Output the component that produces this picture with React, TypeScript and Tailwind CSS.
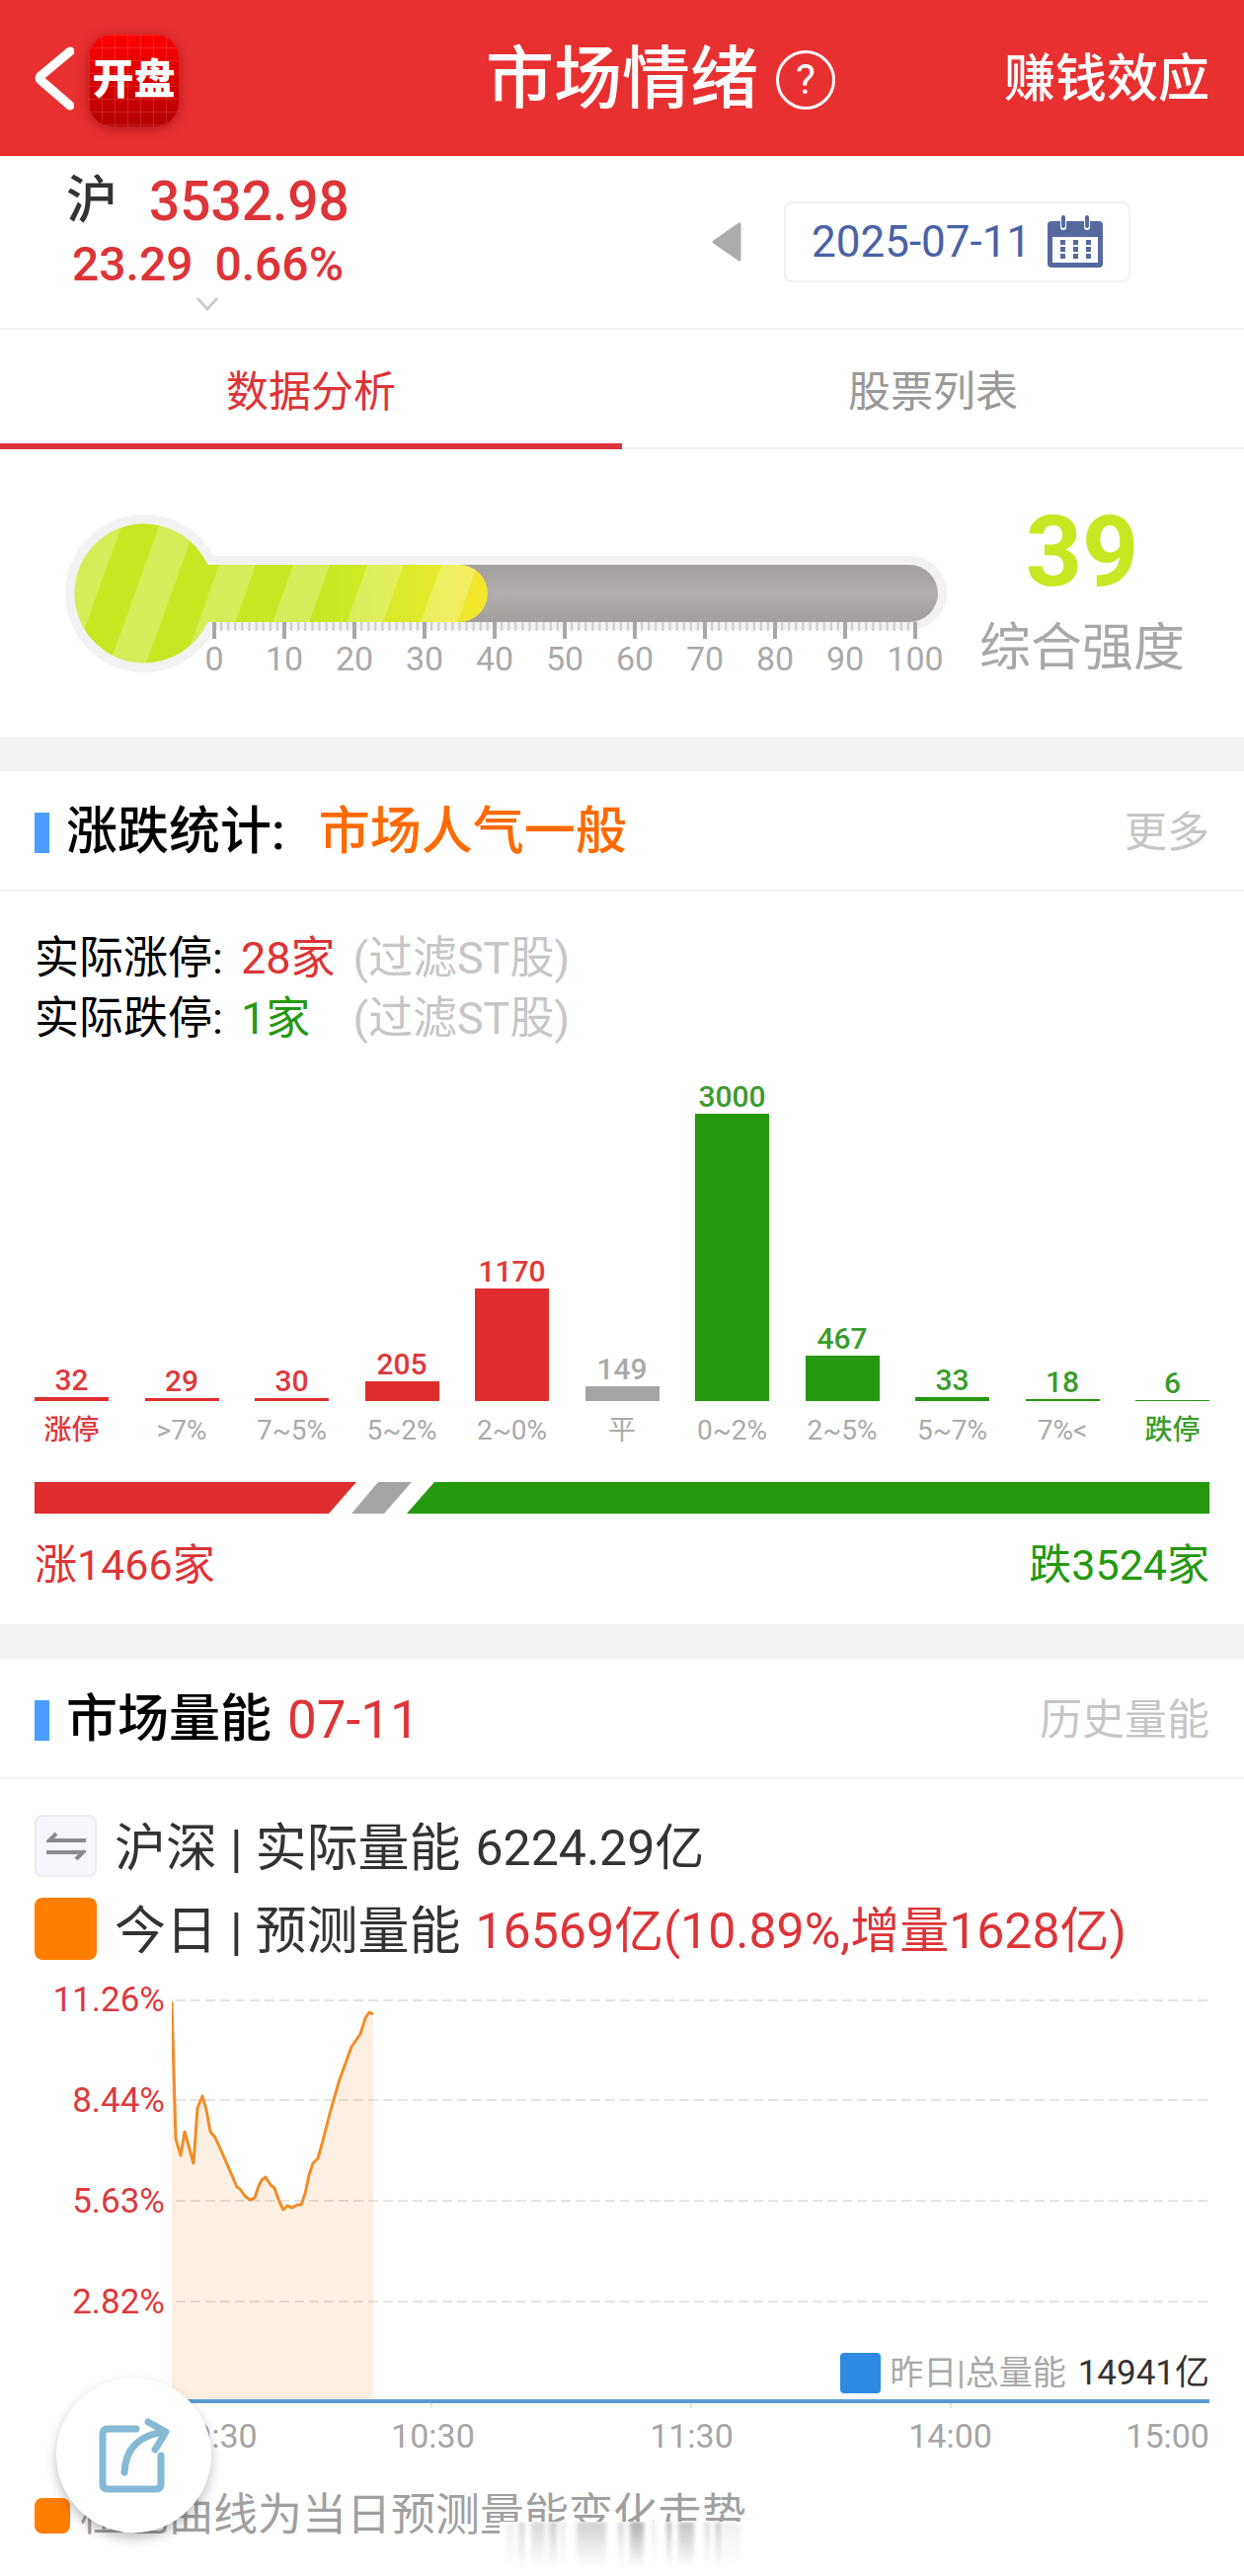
import type { ReactNode } from "react";

const RED = "#df2d2d";
const GREEN = "#24980f";
const GREY = "#a5a5a5";

const distribution = [
  { label: "涨停", count: 32, bar: "bg-[#df2d2d]", text: "text-[#dc3a3c]", labelText: "font-medium text-[#dc3a3c]" },
  { label: ">7%", count: 29, bar: "bg-[#df2d2d]", text: "text-[#dc3a3c]", labelText: "text-[#aaaaaa]" },
  { label: "7~5%", count: 30, bar: "bg-[#df2d2d]", text: "text-[#dc3a3c]", labelText: "text-[#aaaaaa]" },
  { label: "5~2%", count: 205, bar: "bg-[#df2d2d]", text: "text-[#dc3a3c]", labelText: "text-[#aaaaaa]" },
  { label: "2~0%", count: 1170, bar: "bg-[#df2d2d]", text: "text-[#dc3a3c]", labelText: "text-[#aaaaaa]" },
  { label: "平", count: 149, bar: "bg-[#a5a5a5]", text: "text-[#aaaaaa]", labelText: "text-[#aaaaaa]" },
  { label: "0~2%", count: 3000, bar: "bg-[#24980f]", text: "text-[#3a9c2c]", labelText: "text-[#aaaaaa]" },
  { label: "2~5%", count: 467, bar: "bg-[#24980f]", text: "text-[#3a9c2c]", labelText: "text-[#aaaaaa]" },
  { label: "5~7%", count: 33, bar: "bg-[#24980f]", text: "text-[#3a9c2c]", labelText: "text-[#aaaaaa]" },
  { label: "7%<", count: 18, bar: "bg-[#24980f]", text: "text-[#3a9c2c]", labelText: "text-[#aaaaaa]" },
  { label: "跌停", count: 6, bar: "bg-[#24980f]", text: "text-[#3a9c2c]", labelText: "font-medium text-[#3a9c2c]" },
];

const limits = [
  { name: "实际涨停:", value: "28家", note: "(过滤ST股)", color: "text-[#dc3438]" },
  { name: "实际跌停:", value: "1家", note: "(过滤ST股)", color: "text-[#24980f]" },
];

const curve =
  "0,3 4,141 9,158 13,134 22,166 26,110 31,98 35,112 39,134 44,140 53,160 66,190 69,192 74,199 79,203 84,201 88,189 91,183 95,180 100,188 104,191 109,205 113,213 117,209 122,211 127,208 131,208 135,197 139,178 143,166 148,161 152,147 161,112 170,81 182,48 191,35 196,19 200,13 204,15";

// light diagonal bands painted over the thermometer fill
const stripes = [31, 106, 181, 256, 331, 406];

// [x, width, opacity] of the streaks fading out under the caption
const streaks = [
  [6, 10, 0.15], [20, 5, 0.5], [32, 14, 0.4], [50, 8, 0.5], [62, 4, 0.3], [78, 30, 0.45],
  [120, 6, 0.4], [132, 14, 0.8], [154, 4, 0.2], [169, 5, 0.7], [181, 16, 0.6], [208, 5, 0.4], [219, 5, 0.6], [226, 18, 0.15],
];

function Header() {
  return (
    <header className="grid h-[158px] grid-cols-[1fr_auto_1fr] items-center bg-[#e83030] px-[35px] pt-1 text-white">
      <div className="flex items-center gap-[15px]">
        <button type="button" aria-label="返回">
          <svg width="40" height="74" viewBox="0 0 40 74" fill="none" stroke="currentColor" strokeWidth="9" strokeLinecap="round" strokeLinejoin="round">
            <path d="M36 8 6 33q-2 2 0 4L36 63" />
          </svg>
        </button>
        <div className="flex h-[93px] w-[91px] items-center justify-center rounded-3xl bg-linear-to-b from-[#ff0000] to-[#b40000] shadow-[0_2px_12px_rgba(120,0,0,0.5)]">
          <div className="flex h-full w-full items-center justify-center rounded-3xl bg-[linear-gradient(to_right,#ffffff22_1px,transparent_1px),linear-gradient(to_bottom,#ffffff22_1px,transparent_1px)] bg-[size:13px_13px]">
            <span className="text-[42px] font-black leading-none">开盘</span>
          </div>
        </div>
      </div>
      <h1 className="text-[69px] font-medium leading-[80px]">市场情绪</h1>
      <div className="flex items-center justify-between pl-[18px]">
        <button type="button" aria-label="说明" className="flex h-[60px] w-[60px] items-center justify-center rounded-full border-3 border-white text-[42px] leading-none">
          ?
        </button>
        <a href="#effect" className="text-[52px] font-medium leading-[60px]">赚钱效应</a>
      </div>
    </header>
  );
}

function Quote() {
  return (
    <section className="flex h-[176px] items-center justify-between border-b-2 border-[#f3f3f3] pl-[67px] pr-[115px]">
      <button type="button" className="flex flex-col text-left font-medium">
        <span className="flex items-center leading-[64px]">
          <span className="w-[84px] text-[52px] text-[#333333]">沪</span>
          <span className="text-[55px] text-[#dc3438]">3532.98</span>
        </span>
        <span className="flex gap-[22px] pl-[6px] text-[48px] leading-[64px] text-[#dc3438]">
          <span>23.29</span>
          <span>0.66%</span>
        </span>
        <svg className="ml-[130px]" width="26" height="18" viewBox="0 0 26 18" fill="none" stroke="#cccccc" strokeWidth="3">
          <path d="M3 2l10 11L23 2" />
        </svg>
      </button>
      <div className="flex items-center gap-[42px]">
        <button type="button" aria-label="前一天">
          <svg width="32" height="42" viewBox="0 0 32 42" fill="#acacac" stroke="#acacac" strokeWidth="3" strokeLinejoin="round">
            <path d="M3 21 29 3v36z" />
          </svg>
        </button>
        <button type="button" className="flex h-[82px] w-[351px] items-center justify-between rounded-lg border-2 border-[#f2f2f2] pl-[26px] pr-[26px]">
          <span className="text-[44px] leading-none text-[#4862a6]">2025-07-11</span>
          <svg width="56" height="54" viewBox="0 0 56 54" fill="#56699f">
            <path d="M4 6h9v6q0 3 3 3t3-3V6h18v6q0 3 3 3t3-3V6h9q4 0 4 4v39q0 4-4 4H4q-4 0-4-4V10q0-4 4-4z" />
            <path d="M5 22h46v26H5z" fill="#fff" />
            <rect x="14" y="0" width="4" height="13" rx="2" />
            <rect x="38" y="0" width="4" height="13" rx="2" />
            {[13, 26, 39].map((x) => [25, 32, 39].map((y) => <rect key={`${x}-${y}`} x={x} y={y} width="5" height="5" />))}
          </svg>
        </button>
      </div>
    </section>
  );
}

function Tabs() {
  return (
    <nav className="flex h-[121px] text-[43px] leading-[60px]">
      <button type="button" className="flex-1 border-b-6 border-[#dc3438] pt-[10px] text-[#dc3438]">数据分析</button>
      <button type="button" className="flex-1 border-b-2 border-[#f3f3f3] pt-[6px] text-[#999999]">股票列表</button>
    </nav>
  );
}

function Thermometer() {
  return (
    <section className="flex items-start gap-[20px] px-[60px] pt-[64px] pb-[45px]">
      <svg className="min-w-0 flex-1" viewBox="0 0 912 182" role="img" aria-label="综合强度 39">
        <defs>
          <linearGradient id="fill" x1="15" x2="434" y1="0" y2="0" gradientUnits="userSpaceOnUse">
            <stop offset="0.6" stopColor="#c5e822" />
            <stop offset="0.9" stopColor="#e8eb2c" />
            <stop offset="1" stopColor="#f5e52a" />
          </linearGradient>
          <linearGradient id="tube" x1="0" x2="0" y1="0" y2="1">
            <stop offset="0" stopColor="#a39e9e" />
            <stop offset="0.5" stopColor="#b1adac" />
            <stop offset="1" stopColor="#a39e9e" />
          </linearGradient>
          <clipPath id="mercury">
            <circle cx="86" cy="82" r="70.5" />
            <path d="M86 53H405a29 29 0 0 1 0 58H86z" />
          </clipPath>
        </defs>
        <circle cx="86" cy="82" r="80" fill="#f2f2f2" />
        <rect x="86" y="44" width="813" height="75" rx="37" fill="#f2f2f2" />
        <rect x="100" y="53" width="790" height="58" rx="29" fill="url(#tube)" />
        <g clipPath="url(#mercury)">
          <rect width="450" height="170" fill="url(#fill)" />
          {stripes.map((x) => (
            <path key={x} d={`M${x} 0h37l-61 170h-37z`} fill="#ffffff" fillOpacity="0.25" />
          ))}
        </g>
        {Array.from({ length: 101 }, (_, i) => (
          <rect
            key={i}
            x={i % 10 ? 156 + i * 7.1 : 155 + i * 7.1}
            y="111"
            width={i % 10 ? 2 : 4}
            height={i % 10 ? 9 : 17}
            fill={i % 10 ? "#cccccc" : "#a8a8a8"}
          />
        ))}
        {Array.from({ length: 11 }, (_, i) => (
          <text key={i} x={157 + i * 71} y="160" textAnchor="middle" fontSize="34" fill="#aaaaaa">
            {i * 10}
          </text>
        ))}
      </svg>
      <div className="flex w-[208px] shrink-0 flex-col items-center whitespace-nowrap">
        <strong className="text-[100px] font-bold leading-[80px] text-[#c5e822]">39</strong>
        <span className="mt-[26px] text-[52px] leading-[64px] text-[#a8a8a8]">综合强度</span>
      </div>
    </section>
  );
}

function SectionTitle({ title, extra, link }: { title: string; extra: ReactNode; link: string }) {
  return (
    <div className="flex h-[122px] items-center border-b-2 border-[#f3f3f3] px-[35px] pt-1 leading-[60px]">
      <span className="mr-[17px] h-[41px] w-[15px] bg-[#4a9cff]" />
      <h2 className="text-[52px] font-medium text-black">{title}</h2>
      {extra}
      <a href="#more" className="ml-auto text-[43px] text-[#c6c6c6]">{link}</a>
    </div>
  );
}

function RiseFall() {
  return (
    <section className="border-t-[35px] border-[#f2f2f2]">
      <SectionTitle title="涨跌统计:" extra={<span className="ml-[34px] text-[52px] font-medium text-[#ff6a00]">市场人气一般</span>} link="更多" />
      <div className="px-[35px] pt-[37px]">
        <div className="grid grid-cols-[auto_auto_1fr] gap-x-[18px] text-[45px] leading-[61px]">
          {limits.map((row) => (
            <div key={row.name} className="contents">
              <span className="text-black">{row.name}</span>
              <span className={row.color}>{row.value}</span>
              <span className="text-[#c6c6c6]">{row.note}</span>
            </div>
          ))}
        </div>
        <div className="mt-[32px] flex items-end justify-between">
          {distribution.map((d) => (
            <div key={d.label} className="flex w-[75px] flex-col items-center whitespace-nowrap">
              <span className={`text-[30px] font-medium leading-[34px] ${d.text}`}>{d.count}</span>
              <div className={`w-full ${d.bar}`} style={{ height: Math.max(1, Math.ceil(d.count * 0.097)) }} />
              <span className={`mt-[12px] text-[28px] leading-[36px] ${d.labelText}`}>{d.label}</span>
            </div>
          ))}
        </div>
        <svg className="mt-[34px] block h-[32px] w-full" viewBox="0 0 1190 32" preserveAspectRatio="none" aria-hidden="true">
          <path d="M0 0h326l-28 32H0z" fill={RED} />
          <path d="M348 0h34l-28 32h-33z" fill={GREY} />
          <path d="M405 0h785v32H377z" fill={GREEN} />
        </svg>
        <div className="flex justify-between pt-[22px] pb-[29px] text-[43px] leading-[61px]">
          <span className="text-[#dc3438]">涨1466家</span>
          <span className="text-[#24980f]">跌3524家</span>
        </div>
      </div>
    </section>
  );
}

function VolumeChart() {
  return (
    <div className="px-[35px] pt-[23px]">
      <div className="flex">
        <div className="flex w-[132px] flex-col gap-[66px] text-right text-[35px] leading-[36px] text-[#dc3a3c]">
          <span>11.26%</span>
          <span>8.44%</span>
          <span>5.63%</span>
          <span>2.82%</span>
        </div>
        <div className="relative ml-[7px] flex-1 pt-[17px]">
          <svg className="block w-full" viewBox="0 0 1051 414" fill="none" role="img" aria-label="预测量能走势">
            <path d="M0 0V407" stroke="#e6e6e6" strokeWidth="3" />
            <polygon points={`${curve} 204,407 0,407`} fill="#fdf0e2" />
            {[1, 102, 204, 306].map((y) => (
              <path key={y} d={`M4 ${y}H1051`} stroke="#000000" strokeOpacity="0.1" strokeWidth="2" strokeDasharray="10 5" />
            ))}
            <polyline points={curve} stroke="#f28c28" strokeWidth="3" strokeLinejoin="round" />
            <path d="M0 407H1051" stroke="#5b9bd5" strokeWidth="4" />
            <path d="M263 409v5M526 409v5M789 409v5" stroke="#e6e6e6" strokeWidth="2" />
          </svg>
          <div className="absolute right-0 bottom-[15px] flex items-center text-[34px] leading-[41px] text-[#a8a8a8]">
            <span className="mr-[9px] h-[41px] w-[41px] rounded-sm bg-[#2f8ae2]" />
            昨日|总量能
            <span className="ml-[12px] text-[35px] text-[#333333]">14941亿</span>
          </div>
        </div>
      </div>
      <div className="flex justify-between pt-[8px] pl-[141px] text-[34px] leading-[40px] text-[#a5a5a5]">
        <span>09:30</span>
        <span>10:30</span>
        <span className="px-[42px]">11:30</span>
        <span>14:00</span>
        <span>15:00</span>
      </div>
    </div>
  );
}

function Volume() {
  return (
    <section className="relative border-t-[35px] border-[#f2f2f2]">
      <SectionTitle title="市场量能" extra={<span className="ml-[16px] text-[53px] text-[#dc3438]">07-11</span>} link="历史量能" />
      <div className="flex flex-col gap-[21px] px-[35px] pt-[36px] text-[52px] leading-[57px] text-[#333333]">
        <div className="flex items-center">
          <button type="button" aria-label="切换市场" className="mr-[18px] flex h-[63px] w-[63px] items-center justify-center rounded-lg border-2 border-[#ececf0] bg-[#f6f6fc]">
            <svg width="40" height="30" viewBox="0 0 40 30" fill="none" stroke="#8a8a90" strokeWidth="4">
              <path d="M40 9H3L10 2M0 21H37L30 28" />
            </svg>
          </button>
          <p className="flex items-center pt-[6px]">
            沪深 | 实际量能
            <span className="ml-[15px] text-[50px]">6224.29亿</span>
          </p>
        </div>
        <div className="flex items-center">
          <span className="mr-[18px] h-[63px] w-[63px] rounded-lg bg-[#ff7e00]" />
          <p className="flex items-center pt-[6px]">
            今日 | 预测量能
            <span className="ml-[15px] text-[50px] text-[#dc3438]">16569亿(10.89%,增量1628亿)</span>
          </p>
        </div>
      </div>
      <VolumeChart />
      <div className="flex h-[124px] items-center border-b-2 border-[#cccccc] px-[35px]">
        <span className="mr-[10px] h-[36px] w-[36px] rounded-lg bg-[#ff7e00]" />
        <p className="relative text-[45px] leading-[60px] text-[#a0a0a0]">
          橙色曲线为当日预测量能变化走势
          <svg className="absolute top-[36px] right-0" width="250" height="48" viewBox="0 0 250 48" aria-hidden="true">
            <defs>
              <linearGradient id="fade" x1="0" x2="0" y1="0" y2="1">
                <stop offset="0" stopColor="#999999" />
                <stop offset="1" stopColor="#ffffff" />
              </linearGradient>
            </defs>
            <rect width="250" height="48" fill="#ffffff" />
            <g className="blur-[2px]">
              {streaks.map(([x, w, o]) => (
                <rect key={x} x={x} width={w} height="46" fill="url(#fade)" opacity={o} />
              ))}
            </g>
          </svg>
        </p>
      </div>
      <button type="button" aria-label="分享" className="absolute bottom-[46px] left-[57px] flex h-[157px] w-[157px] items-center justify-center rounded-full bg-white shadow-[0_6px_12px_rgba(0,0,0,0.25)]">
        <svg width="72" height="76" viewBox="0 0 72 76" fill="none" stroke="#85b9d6" strokeWidth="7" strokeLinecap="round" strokeLinejoin="round">
          <path d="M38 11H9q-5 0-5 5V67q0 5 5 5H58q5 0 5-5V38" />
          <path d="M26 55C27 32 40 17 67 14M50 4 68 14 57 32" />
        </svg>
      </button>
    </section>
  );
}

export default function App() {
  return (
    <main className="min-h-screen bg-white font-['Roboto','Noto_Sans_CJK_SC',sans-serif]">
      <Header />
      <Quote />
      <Tabs />
      <Thermometer />
      <RiseFall />
      <Volume />
    </main>
  );
}
